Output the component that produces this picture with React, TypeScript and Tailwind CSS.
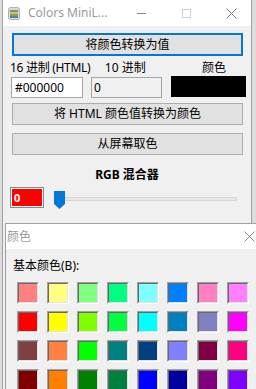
import React from "react";

const ui = { fontFamily: '"Segoe UI", "Noto Sans", "Noto Sans CJK SC", sans-serif' };
const cjk = { fontFamily: '"Noto Sans", "Noto Sans CJK SC", sans-serif' };

const basic = [
  ["#ff8080", "#ffff80", "#80ff80", "#00ff80", "#80ffff", "#0080ff", "#ff80c0", "#ff80ff"],
  ["#ff0000", "#ffff00", "#80ff00", "#00ff40", "#00ffff", "#0080c0", "#8080c0", "#ff00ff"],
  ["#804040", "#ff8040", "#00ff00", "#008080", "#004080", "#8080ff", "#800040", "#ff0080"],
  ["#800000", "#ff8000", "#008000", "#008040", "#0000ff", "#0000a0", "#800080", "#8000ff"],
];

// app icon, little stack of colour bars
const AppIcon = () => (
  <svg width="12" height="13" viewBox="0 0 12 13">
    <rect x="0.5" y="0.5" width="11" height="12" rx="2" fill="#d8d8d8" stroke="#b0b0b0" />
    <rect x="2" y="3" width="8" height="2" fill="#8a8a7a" />
    <rect x="2" y="5" width="8" height="2" fill="#d8c060" />
    <rect x="2" y="7" width="8" height="2" fill="#70a860" />
    <rect x="2" y="9" width="8" height="2" fill="#4a8aa0" />
  </svg>
);

const CloseX = ({ color = "#777" }: { color?: string }) => (
  <svg width="11" height="11" viewBox="0 0 11 11">
    <path d="M0.5 0.5 L10.5 10.5 M10.5 0.5 L0.5 10.5" stroke={color} strokeWidth="1" />
  </svg>
);

const Btn = ({ label, focus, className }: { label: string; focus?: boolean; className: string }) => (
  <div
    className={
      "flex items-center justify-center bg-[#e1e1e1] text-[12px] text-black whitespace-nowrap " +
      (focus ? "border-2 border-[#0078d7] " : "border border-[#adadad] ") +
      className
    }
    style={cjk}
  >
    {label}
  </div>
);

const Swatch = ({ c }: { c: string }) => (
  <div className="w-[22px] h-[22px] border border-t-[#a0a0a0] border-l-[#a0a0a0] border-b-white border-r-white">
    <div className="w-full h-full border border-t-[#696969] border-l-[#696969] border-b-[#e3e3e3] border-r-[#e3e3e3]" style={{ background: c }} />
  </div>
);

export default function App() {
  return (
    <div className="relative w-[256px] h-[389px] overflow-hidden bg-[#dcdcdc]">
      {/* main window */}
      <div className="absolute left-[2px] top-0 w-[250px] h-[389px] border-x border-[#a0a0a0] bg-[#f0f0f0] flex flex-col">
        <div className="h-[26px] bg-white flex items-center shrink-0">
          <div className="ml-[5px]"><AppIcon /></div>
          <span className="ml-[8px] text-[12px] text-[#9a9a9a] leading-none whitespace-nowrap" style={ui}>Colors MiniL...</span>
          <div className="ml-auto w-[9px] h-px bg-[#8a8a8a]" />
          <div className="ml-[36px] w-[9px] h-[9px] border border-[#d0d0d0]" />
          <div className="ml-[35px] mr-[14px]"><CloseX color="#7a7a7a" /></div>
        </div>

        <Btn label="将颜色转换为值" focus className="ml-[9px] mt-[7px] w-[231px] h-[23px]" />

        <div className="flex mt-[4px] h-[16px] text-[12px] leading-[16px] text-black whitespace-nowrap" style={cjk}>
          <div className="ml-[7px] w-[96px] tracking-[-0.3px]">16 进制 (HTML)</div>
          <div className="w-[65px]">10 进制</div>
          <div className="ml-[8px] w-[75px] text-center">颜色</div>
        </div>

        <div className="flex items-start mt-[1px]">
          <div className="ml-[8px] w-[72px] h-[21px] bg-white border border-[#a5a5a5] flex items-center pl-[3px] text-[12px]" style={ui}>
            #000000
          </div>
          <div className="ml-[8px] w-[71px] h-[21px] bg-[#f0f0f0] border border-[#a5a5a5] flex items-center pl-[2px] text-[12px]" style={ui}>
            0
          </div>
          <div className="ml-[9px] -mt-px w-[75px] h-[21px] bg-black" />
        </div>

        <Btn label="将 HTML 颜色值转换为颜色" className="ml-[9px] mt-[5px] w-[231px] h-[22px]" />
        <Btn label="从屏幕取色" className="ml-[9px] mt-[8px] w-[231px] h-[22px]" />

        <div className="mt-[12px] h-[16px] leading-[16px] text-center text-[12px] font-bold text-black" style={cjk}>
          RGB 混合器
        </div>

        <div className="flex items-start mt-[4px]">
          <div className="ml-[7px] w-[34px] h-[21px] border border-[#8a8a8a] p-px bg-white">
            <div className="w-full h-full bg-[#ff0000] text-white font-bold text-[11px] leading-[17px] pl-[2px]" style={ui}>0</div>
          </div>
          <div className="relative ml-[10px] mt-[4px] w-[183px] h-[18px]">
            <div className="absolute left-0 right-0 top-[6px] h-[4px] bg-[#e7e7e7] border border-[#d6d6d6]" />
            <svg className="absolute left-0 top-0" width="11" height="18" viewBox="0 0 11 18">
              <path d="M0 0 H11 V13 L5.5 18 L0 13 Z" fill="#0078d7" />
            </svg>
          </div>
        </div>
      </div>

      {/* colour dialog */}
      <div className="absolute left-[5px] top-[223px] w-[268px] h-[180px] border border-[#a0a0a0] bg-[#f0f0f0] flex flex-col">
        <div className="h-[25px] bg-white flex items-center shrink-0">
          <span className="ml-[1px] text-[12px] text-[#9a9a9a]" style={cjk}>颜色</span>
          <div className="ml-auto w-[46px] flex justify-center"><CloseX color="#8a8a8a" /></div>
        </div>
        <div className="ml-[7px] mt-[9px] h-[16px] leading-[16px] text-[12px] text-black whitespace-nowrap" style={cjk}>基本颜色(B):</div>
        <div className="ml-[11px] mt-[8px] grid grid-cols-[repeat(8,22px)] gap-x-[8px] gap-y-[7px]">
          {basic.flat().map((c, i) => (
            <Swatch key={i} c={c} />
          ))}
        </div>
      </div>
    </div>
  );
}
